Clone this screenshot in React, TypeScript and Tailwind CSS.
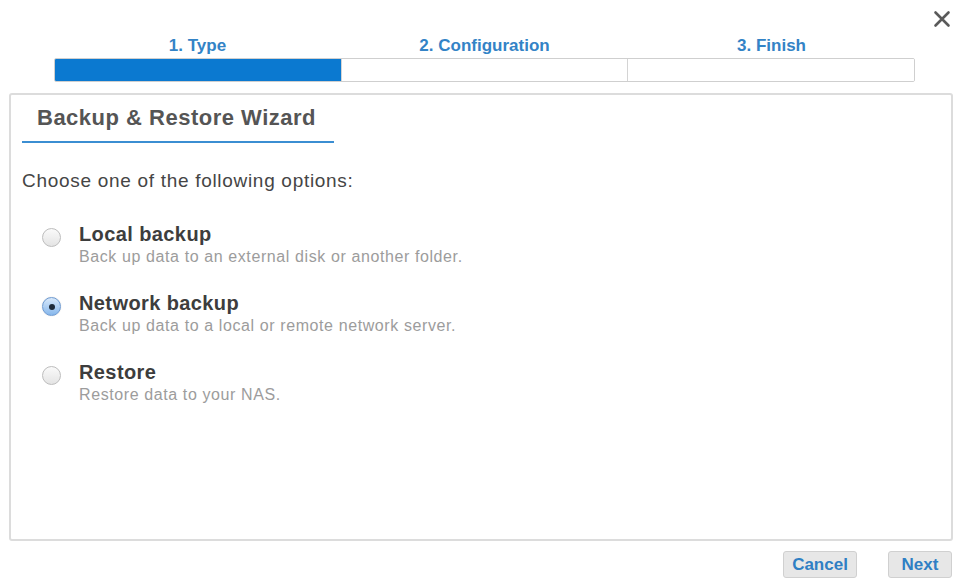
import React from "react";

const font = { fontFamily: '"Liberation Sans", Arial, Helvetica, sans-serif' };

const steps = ["1. Type", "2. Configuration", "3. Finish"];

const options = [
  { title: "Local backup", desc: "Back up data to an external disk or another folder.", checked: false },
  { title: "Network backup", desc: "Back up data to a local or remote network server.", checked: true },
  { title: "Restore", desc: "Restore data to your NAS.", checked: false },
];

function Radio({ checked }: { checked: boolean }) {
  if (checked) {
    return (
      <div className="mt-[6px] flex h-[19px] w-[19px] shrink-0 items-center justify-center rounded-full border border-[#6e9bd3] bg-gradient-to-b from-[#d9e9fa] to-[#86b7ec] shadow-[0_0_1px_rgba(0,0,0,0.25)]">
        <div className="h-[6px] w-[6px] rounded-full bg-[#1d2a3a]" />
      </div>
    );
  }
  return (
    <div className="mt-[6px] h-[19px] w-[19px] shrink-0 rounded-full border border-[#bdbdbd] bg-gradient-to-b from-[#fafafa] to-[#e4e4e4]" />
  );
}

export default function App() {
  return (
    <div className="relative h-[581px] w-[959px] overflow-hidden bg-white" style={font}>
      {/* close button */}
      <button className="absolute left-[932px] top-[9px] flex h-[20px] w-[20px] items-center justify-center">
        <svg width="18" height="18" viewBox="0 0 18 18">
          <path d="M2.5 2.5 L15.5 15.5 M15.5 2.5 L2.5 15.5" stroke="#5a5a5a" strokeWidth="2.6" strokeLinecap="round" />
        </svg>
      </button>

      {/* step indicator */}
      <div className="ml-[54px] w-[861px] pt-[36px]">
        <div className="flex">
          {steps.map((s) => (
            <div key={s} className="flex-1 text-center text-[17px] font-bold leading-[20px] text-[#3383c6]">
              {s}
            </div>
          ))}
        </div>
        <div className="mt-[2px] flex h-[24px] overflow-hidden rounded-[2px] border border-[#cfcfcf]">
          <div className="flex-1 bg-[#0b79d0]" />
          <div className="flex-1 border-l border-[#d4d4d4] bg-white" />
          <div className="flex-1 border-l border-[#d4d4d4] bg-white" />
        </div>
      </div>

      {/* wizard panel */}
      <div className="ml-[9px] mt-[11px] h-[448px] w-[944px] rounded-[3px] border-2 border-[#dcdcdc] bg-white">
        <div className="ml-[11px] mt-[8px] w-[312px] border-b-2 border-[#3b8ed2] pb-[8px] pl-[15px]">
          <div className="text-[22px] font-bold leading-[30px] tracking-[0.5px] text-[#555555]">
            Backup &amp; Restore Wizard
          </div>
        </div>

        <div className="ml-[11px] mt-[26px] text-[19px] leading-[24px] tracking-[0.7px] text-[#454545]">
          Choose one of the following options:
        </div>

        <div className="ml-[31px] mt-[29px] flex flex-col gap-[24px]">
          {options.map((o) => (
            <div key={o.title} className="flex gap-[18px]">
              <Radio checked={o.checked} />
              <div className="flex flex-col">
                <div className="text-[20px] font-bold leading-[24px] tracking-[0.4px] text-[#3d3d3d]">{o.title}</div>
                <div className="pt-[1px] text-[16px] leading-[20px] tracking-[0.6px] text-[#9c9c9c]">{o.desc}</div>
              </div>
            </div>
          ))}
        </div>
      </div>

      {/* footer buttons */}
      <div className="mt-[10px] flex w-[952px] justify-end gap-[31px]">
        <button className="h-[27px] w-[74px] rounded-[3px] border border-[#d0d0d0] bg-[#e7e7e7] text-[17px] font-bold text-[#2f7fc4]">
          Cancel
        </button>
        <button className="h-[27px] w-[64px] rounded-[3px] border border-[#d0d0d0] bg-[#e7e7e7] text-[17px] font-bold text-[#2f7fc4]">
          Next
        </button>
      </div>
    </div>
  );
}
